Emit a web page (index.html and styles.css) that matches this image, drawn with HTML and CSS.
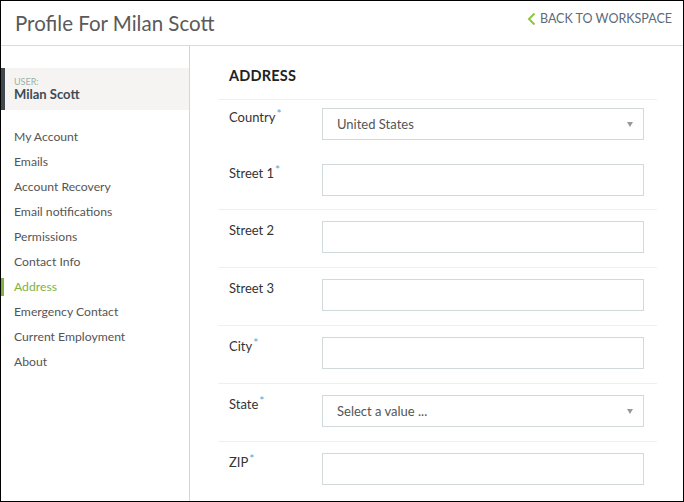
FILE: index.html
```html
<!DOCTYPE html>
<html>
<head>
<meta charset="utf-8">
<link rel="stylesheet" href="styles.css">
</head>
<body>
<div class="frame">
  <header class="top">
    <h1 class="title">Profile For Milan Scott</h1>
    <a class="back" href="#">
      <svg class="chev" width="9" height="14" viewBox="0 0 9 14"><polyline points="7.5,1.5 2,7 7.5,12.5" fill="none" stroke="#8cc63e" stroke-width="2"/></svg>
      <span>BACK TO WORKSPACE</span>
    </a>
  </header>
  <div class="body">
    <aside class="side">
      <div class="user">
        <div class="user-lbl">USER:</div>
        <div class="user-name">Milan Scott</div>
      </div>
      <nav class="nav">
        <a class="item">My Account</a>
        <a class="item">Emails</a>
        <a class="item">Account Recovery</a>
        <a class="item">Email notifications</a>
        <a class="item">Permissions</a>
        <a class="item">Contact Info</a>
        <a class="item active">Address</a>
        <a class="item">Emergency Contact</a>
        <a class="item">Current Employment</a>
        <a class="item">About</a>
      </nav>
    </aside>
    <main class="main">
      <h2 class="heading">ADDRESS</h2>
      <div class="group first">
        <div class="row">
          <label class="lbl">Country<sup class="req">*</sup></label>
          <div class="field select"><span class="val">United States</span><span class="arrow"></span></div>
        </div>
        <div class="row gap">
          <label class="lbl">Street 1<sup class="req">*</sup></label>
          <div class="field"></div>
        </div>
      </div>
      <div class="group">
        <div class="row">
          <label class="lbl">Street 2</label>
          <div class="field"></div>
        </div>
      </div>
      <div class="group">
        <div class="row">
          <label class="lbl">Street 3</label>
          <div class="field"></div>
        </div>
      </div>
      <div class="group">
        <div class="row">
          <label class="lbl">City<sup class="req">*</sup></label>
          <div class="field"></div>
        </div>
      </div>
      <div class="group">
        <div class="row">
          <label class="lbl">State<sup class="req">*</sup></label>
          <div class="field select"><span class="val">Select a value ...</span><span class="arrow"></span></div>
        </div>
      </div>
      <div class="group">
        <div class="row">
          <label class="lbl">ZIP<sup class="req">*</sup></label>
          <div class="field"></div>
        </div>
      </div>
    </main>
  </div>
</div>
</body>
</html>
```
FILE: styles.css
```css
* { box-sizing: border-box; }
html, body { margin: 0; padding: 0; background: #fff; }
body { font-family: "Lato", "Liberation Sans", sans-serif; color: #555; }
.frame {
  width: 684px; height: 502px;
  border: 1px solid #000;
  display: flex; flex-direction: column;
  overflow: hidden;
}
.top {
  height: 45px;
  border-bottom: 1px solid #d5dcdc;
  display: flex; justify-content: space-between; align-items: flex-start;
  flex-shrink: 0;
}
.title {
  margin: 0; padding: 8px 0 0 14px;
  font-size: 20.5px; line-height: 28px; font-weight: 400; color: #5a5a5a;
}
.back {
  display: flex; align-items: center; gap: 4px;
  padding: 10px 11px 0 0;
  text-decoration: none;
  color: #5d6a78; font-size: 12.5px; line-height: 16px;
}
.chev { display: block; }
.body { flex: 1; display: flex; min-height: 0; }
.side {
  width: 189px; flex-shrink: 0;
  border-right: 1px solid #cfd7d7;
  padding-top: 22px;
}
.user {
  height: 42px;
  background: #f5f4f2;
  border-left: 4px solid #3f494d;
  padding: 8px 0 0 9px;
}
.user-lbl { font-size: 9px; line-height: 11px; color: #9db0a4; }
.user-name { font-size: 13px; line-height: 14px; font-weight: 700; color: #3e4b58; }
.nav { display: flex; flex-direction: column; margin-top: 18px; }
.item {
  display: block; height: 18px; line-height: 18px; margin-bottom: 7px;
  padding-left: 10px; border-left: 3px solid transparent;
  font-size: 12.2px; color: #555;
}
.item.active { border-left-color: #7cb342; color: #7cb342; }
.main { flex: 1; padding: 20px 26px 0 28px; }
.heading {
  margin: 0 0 13px 0; padding-left: 11px;
  font-size: 14.5px; line-height: 20px; font-weight: 700; color: #222; letter-spacing: 0.2px;
}
.group { border-top: 1px solid #eef0f0; padding: 11px 13px 14px 0; }
.group.first { padding-top: 8px; padding-bottom: 13px; }
.row { display: flex; align-items: flex-start; }
.row.gap { margin-top: 24px; }
.lbl {
  width: 104px; flex-shrink: 0; padding: 0 0 0 11px;
  font-size: 13px; line-height: 18px; color: #333;
}
.req { color: #5b9fd6; font-size: 12px; line-height: 0; vertical-align: 4px; margin-left: 1px; }
.field {
  flex: 1; height: 32px;
  border: 1px solid #d0dada;
  background: #fff;
  display: flex; align-items: center; justify-content: space-between;
  padding: 0 10px 0 14px;
}
.val { font-size: 13px; color: #555; }
.arrow {
  width: 0; height: 0;
  border-left: 3.5px solid transparent; border-right: 3.5px solid transparent;
  border-top: 5px solid #999;
  margin-top: 1px;
}
```
